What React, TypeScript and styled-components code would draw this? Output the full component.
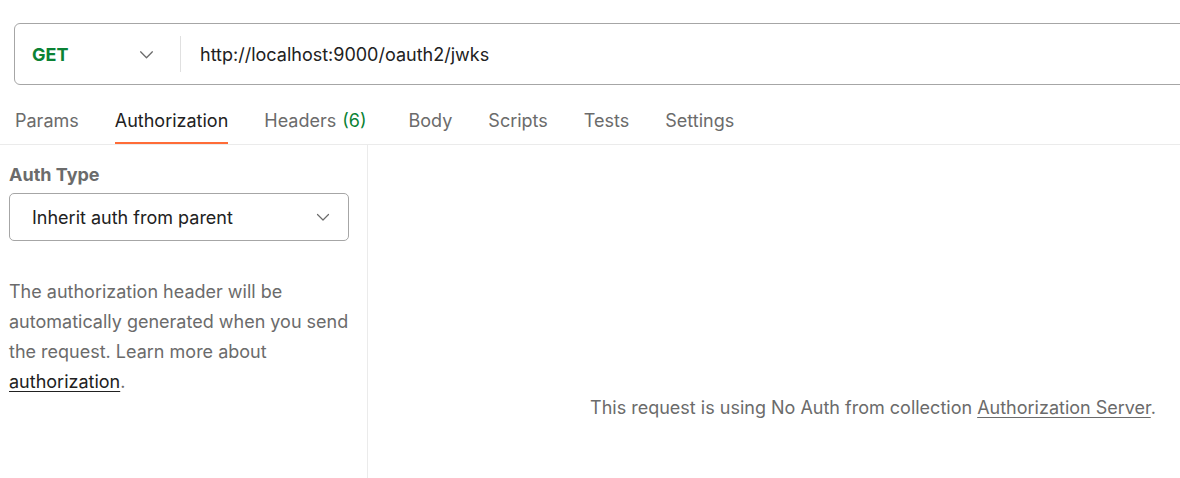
import React from "react";
import styled, { createGlobalStyle } from "styled-components";

const Global = createGlobalStyle`
  html, body { margin: 0; padding: 0; background: #ffffff; overflow: hidden; }
  body { font-family: Inter, "Noto Sans", sans-serif; color: #212121; }
`;

const Page = styled.div`
  width: 1378px;
  display: flex;
  flex-direction: column;
`;

const UrlBar = styled.div`
  margin: 23px 0 0 14px;
  height: 60px;
  border: 1px solid #a6a6a6;
  border-radius: 6px;
  display: flex;
  align-items: center;
`;

const Method = styled.div`
  width: 165px;
  box-sizing: border-box;
  padding: 0 26px 0 17px;
  display: flex;
  align-items: center;
  justify-content: space-between;
  font-size: 18px;
  font-weight: 700;
  color: #0b8235;
`;

const Divider = styled.div`
  width: 1px;
  height: 36px;
  background: #e0e0e0;
`;

const UrlText = styled.div`
  padding-left: 19px;
  font-size: 18px;
  color: #212121;
`;

const TabRow = styled.div`
  height: 59px;
  border-bottom: 1px solid #ebebeb;
  display: flex;
  padding-left: 15px;
  gap: 36px;
`;

const Tab = styled.div<{ $active?: boolean; $extra?: number }>`
  position: relative;
  display: flex;
  align-items: center;
  font-size: 18px;
  color: ${(p) => (p.$active ? "#212121" : "#6b6b6b")};
  padding-top: 11px;
  margin-left: ${(p) => p.$extra ?? 0}px;
  &::after {
    content: "";
    display: ${(p) => (p.$active ? "block" : "none")};
    position: absolute;
    left: 0;
    right: 0;
    bottom: 0;
    height: 2px;
    background: #ff6c37;
  }
`;

const Count = styled.span`
  color: #0b8235;
  margin-left: 6px;
`;

const Content = styled.div`
  display: flex;
  height: 340px;
`;

const LeftPanel = styled.div`
  width: 368px;
  box-sizing: border-box;
  border-right: 1px solid #ebebeb;
  padding: 19px 0 0 9px;
`;

const Label = styled.div`
  font-size: 18px;
  font-weight: 700;
  color: #6b6b6b;
  line-height: 22px;
`;

const Select = styled.div`
  margin-top: 7px;
  width: 340px;
  height: 48px;
  box-sizing: border-box;
  border: 1px solid #a6a6a6;
  border-radius: 5px;
  display: flex;
  align-items: center;
  justify-content: space-between;
  padding: 0 18px 0 22px;
  font-size: 18px;
  color: #212121;
`;

const Help = styled.p`
  margin: 36px 0 0;
  font-size: 18px;
  line-height: 30px;
  color: #6b6b6b;
  width: 345px;
`;

const Link = styled.a<{ $dark?: boolean }>`
  color: ${(p) => (p.$dark ? "#212121" : "#6b6b6b")};
  text-decoration: underline;
  text-underline-offset: 3px;
`;

const RightPanel = styled.div`
  flex: 1;
  display: flex;
  justify-content: center;
  padding-top: 252px;
  font-size: 18px;
  color: #6b6b6b;
`;

const Chevron = ({ w = 14 }: { w?: number }) => (
  <svg width={w} height={w} viewBox="0 0 14 14" fill="none">
    <path d="M1.5 4.5L7 10l5.5-5.5" stroke="#6b6b6b" strokeWidth="1.2" strokeLinecap="round" strokeLinejoin="round" />
  </svg>
);

export default function App() {
  return (
    <Page>
      <Global />
      <UrlBar>
        <Method>
          <span>GET</span>
          <Chevron w={15} />
        </Method>
        <Divider />
        <UrlText>http://localhost:9000/oauth2/jwks</UrlText>
      </UrlBar>
      <TabRow>
        <Tab>Params</Tab>
        <Tab $active>Authorization</Tab>
        <Tab>
          Headers<Count>(6)</Count>
        </Tab>
        <Tab $extra={6}>Body</Tab>
        <Tab>Scripts</Tab>
        <Tab>Tests</Tab>
        <Tab>Settings</Tab>
      </TabRow>
      <Content>
        <LeftPanel>
          <Label>Auth Type</Label>
          <Select>
            <span>Inherit auth from parent</span>
            <Chevron w={14} />
          </Select>
          <Help>
            The authorization header will be automatically generated when you send the request. Learn more about{" "}
            <Link $dark>authorization</Link>.
          </Help>
        </LeftPanel>
        <RightPanel>
          <span>
            This request is using No Auth from collection <Link>Authorization Server</Link>.
          </span>
        </RightPanel>
      </Content>
    </Page>
  );
}
